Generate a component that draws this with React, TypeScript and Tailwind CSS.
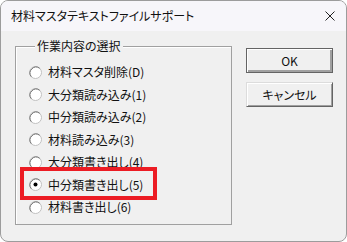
import React from "react";

const items = [
  "材料マスタ削除(D)",
  "大分類読み込み(1)",
  "中分類読み込み(2)",
  "材料読み込み(3)",
  "大分類書き出し(4)",
  "中分類書き出し(5)",
  "材料書き出し(6)",
];

function Radio({ checked }: { checked: boolean }) {
  return (
    <svg width="13" height="13" viewBox="0 0 13 13" className="shrink-0">
      <circle cx="6.5" cy="6.5" r="6" fill="#ffffff" stroke="#c0c0c0" />
      <path d="M2.3 10.7 A6 6 0 0 1 10.7 2.3" fill="none" stroke="#707070" strokeWidth="1" />
      {checked && <circle cx="6.5" cy="6.5" r="2" fill="#000000" />}
    </svg>
  );
}

export default function App() {
  const font = "font-['Noto_Sans_CJK_JP','Noto_Sans',sans-serif] [font-feature-settings:'palt']";
  return (
    <div className={`w-[347px] h-[242px] bg-white relative ${font}`}>
      <div className="w-full h-full border border-[#9c9c9c] rounded-[8px] overflow-hidden bg-[#f0f0f0] flex flex-col">
        <div className="h-[30px] shrink-0 bg-[#f7f6fa] flex items-center justify-between pl-[10px] pr-[10px]">
          <span className="text-[12px] leading-[16px] text-[#111]">材料マスタテキストファイルサポート</span>
          <svg width="10" height="10" viewBox="0 0 10 10" className="mr-[1px]">
            <path d="M0.5 0.5 L9.5 9.5 M9.5 0.5 L0.5 9.5" stroke="#222" strokeWidth="1" />
          </svg>
        </div>
        <div className="flex items-start">
          <fieldset className="ml-[14px] mt-[7px] w-[217px] h-[187px] border border-[#a0a0a0] shadow-[inset_1px_1px_0_#ffffff] pl-[13px] pt-[7px]">
            <legend className="ml-[6px] px-[2px] bg-[#f0f0f0] text-[12px] leading-[16px] text-[#111]">作業内容の選択</legend>
            <div className="flex flex-col">
              {items.map((t, i) => (
                <div key={t} className="h-[22.5px] flex items-center gap-[6px]">
                  <Radio checked={i === 5} />
                  <span className="text-[12px] leading-[16px] text-[#111]">{t}</span>
                </div>
              ))}
            </div>
          </fieldset>
          <div className="ml-[14px] mt-[17px] flex flex-col gap-[9px]">
            <button className="w-[87px] h-[25px] bg-[#f0f0f0] border border-[#646464] shadow-[inset_1px_1px_0_#ffffff,inset_-1px_-1px_0_#a0a0a0,inset_-2px_-2px_0_#a0a0a0] text-[12px] leading-[16px] text-[#111] flex items-center justify-center">
              OK
            </button>
            <button className="w-[87px] h-[25px] bg-[#f0f0f0] border border-[#dcdcdc] border-r-[#646464] border-b-[#646464] shadow-[inset_1px_1px_0_#ffffff,inset_-1px_-1px_0_#a0a0a0] text-[12px] leading-[16px] text-[#111] flex items-center justify-center">
              キャンセル
            </button>
          </div>
        </div>
      </div>
      <div className="absolute left-[20px] top-[167px] w-[137px] h-[33px] border-[4px] border-[#ec1c24]" />
    </div>
  );
}
